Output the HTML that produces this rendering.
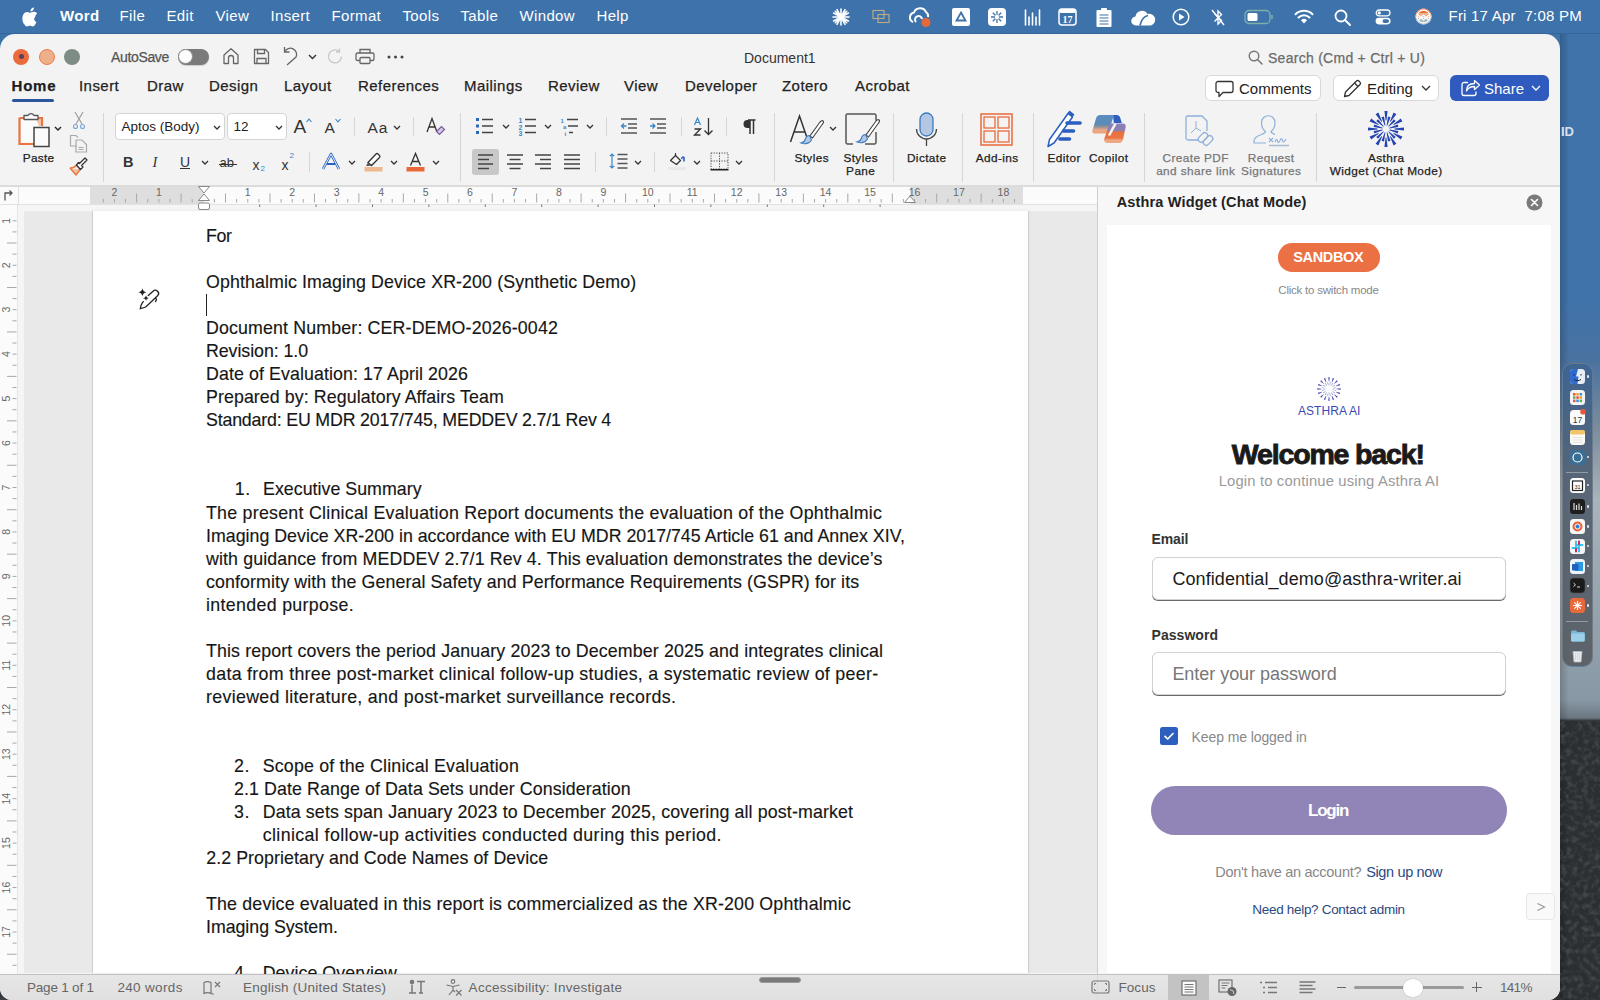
<!DOCTYPE html>
<html><head><meta charset="utf-8">
<style>
*{box-sizing:border-box;margin:0;padding:0}
html,body{width:1600px;height:1000px;overflow:hidden}
body{position:relative;font-family:"Liberation Sans",sans-serif;background:#3e72aa;color:#222}
.a{position:absolute}
.t{position:absolute;white-space:nowrap;line-height:1}
svg{position:absolute;overflow:visible}
#menubar{left:0;top:0;width:1600px;height:34px;background:#3e72aa;border-bottom:1px solid #35649a}
#menubar .t{color:#fff;font-size:15px;top:8px;letter-spacing:.35px}
#desk{left:1540px;top:34px;width:60px;height:966px;background:linear-gradient(180deg,#3f73aa 0px,#3f73aa 266px,#4a72a0 326px,#7c8d9c 396px,#a9b3bb 466px,#96a4ae 566px,#8899a6 666px,#6a7680 684px,#2c2f32 687px,#2c2f32 966px)}
#wrap{left:0;top:0;width:1560px;height:1000px;clip-path:inset(34px 0 0 0 round 15px 15px 12px 12px)}
#win{left:0;top:34px;width:1560px;height:966px;background:#f3f3f3}
.tab{position:absolute;top:78.200px;font-size:15px;color:#222;white-space:nowrap;line-height:1;-webkit-text-stroke:.25px #222;letter-spacing:.45px}
.md{-webkit-text-stroke:.25px currentColor}
.lbl{position:absolute;font-size:12.5px;color:#222;white-space:nowrap;line-height:13px;text-align:center}
.sep{position:absolute;width:1px;background:#d6d6d6}
.doc{position:absolute;font-size:17.8px;color:#161616;-webkit-text-stroke:0.15px #161616;white-space:nowrap;line-height:1}
</style></head><body>
<div id="menubar" class="a">
  <svg style="left:22px;top:7px" width="16" height="19" viewBox="0 0 16 19"><path fill="#fff" d="M13.2 10.1c0-2.3 1.9-3.4 2-3.5-1.1-1.6-2.8-1.8-3.4-1.8-1.4-.1-2.8.9-3.5.9-.7 0-1.8-.9-3-.8C3.7 4.9 2.3 5.8 1.5 7.2-.1 10-.1 14.300 2.300 17.3c.7 1 1.6 2.200 2.700 2.100 1.100 0 1.500-.7 2.800-.7s1.700.7 2.800.7c1.200 0 1.900-1 2.600-2 .8-1.200 1.200-2.300 1.200-2.400-.1 0-2.300-.9-2.300-3.500zM11 3.200c.6-.7 1-1.700.9-2.700-.9 0-1.900.6-2.500 1.300-.6.600-1 1.600-.9 2.600 1 .1 1.900-.5 2.500-1.200z"/></svg>
  <div class="t" style="left:60px;font-weight:bold">Word</div>
  <div class="t" style="left:119.5px">File</div>
  <div class="t" style="left:166.5px">Edit</div>
  <div class="t" style="left:215.5px">View</div>
  <div class="t" style="left:270.5px">Insert</div>
  <div class="t" style="left:331.5px">Format</div>
  <div class="t" style="left:402.5px">Tools</div>
  <div class="t" style="left:460.5px">Table</div>
  <div class="t" style="left:519.5px">Window</div>
  <div class="t" style="left:596.5px">Help</div>
  <!-- status icons -->
  <svg style="left:832px;top:8px" width="18" height="18" viewBox="0 0 18 18"><g stroke="#fff" stroke-width="1.6" stroke-linecap="round"><path d="M9 1v16M1 9h16M3.3 3.3l11.4 11.4M14.7 3.3L3.3 14.7M5 1.6l8 14.8M13 1.6L5 16.4M1.6 5l14.8 8M1.6 13l14.8-8"/></g></svg>
  <svg style="left:872px;top:9px" width="19" height="15" viewBox="0 0 19 15"><g fill="none" stroke="#b9a98a" stroke-width="1.2"><rect x="1" y="1.5" width="11" height="8"/><rect x="6" y="5.5" width="11" height="8"/></g></svg>
  <svg style="left:907px;top:6px" width="26" height="22" viewBox="0 0 26 22"><path d="M6 16a5 5 0 0 1 1-9.5A6.500 6.500 0 0 1 19 6a5 5 0 0 1 2 5" fill="none" stroke="#fff" stroke-width="2"/><path d="M9 16a3.500 3.500 0 1 1 6-3" fill="none" stroke="#fff" stroke-width="2"/><circle cx="19" cy="16.500" r="4.500" fill="#e8683a"/></svg>
  <svg style="left:952px;top:8px" width="18" height="18" viewBox="0 0 18 18"><rect width="18" height="18" rx="2" fill="#fff"/><path d="M9 4.500l4.500 8h-9z" fill="none" stroke="#3e72aa" stroke-width="1.800"/></svg>
  <svg style="left:988px;top:8px" width="18" height="18" viewBox="0 0 18 18"><rect width="18" height="18" rx="4" fill="#fff"/><g stroke="#3e72aa" stroke-width="1.300"><path d="M9 3v12M3 9h12M4.800 4.800l8.400 8.400M13.200 4.800l-8.400 8.400"/></g><circle cx="9" cy="9" r="2.200" fill="#fff"/></svg>
  <svg style="left:1024px;top:8px" width="17" height="18" viewBox="0 0 17 18"><g stroke="#fff" stroke-width="1.600" stroke-linecap="round"><path d="M1.500 2v15M5 9v8M8.500 5v12M12 9v8M15.500 2v15"/></g></svg>
  <svg style="left:1058px;top:8px" width="19" height="18" viewBox="0 0 19 18"><rect x="1" y="1" width="17" height="16" rx="3" fill="none" stroke="#fff" stroke-width="1.500"/><rect x="1" y="1" width="17" height="4" rx="2" fill="#fff"/><text x="9.500" y="15" font-size="10" font-weight="bold" fill="#fff" text-anchor="middle" font-family="Liberation Serif">17</text></svg>
  <svg style="left:1096px;top:8px" width="16" height="19" viewBox="0 0 16 19"><rect x="0.500" y="2" width="15" height="17" rx="1" fill="#fff"/><rect x="5" y="0" width="6" height="3" rx="1" fill="#fff"/><g stroke="#3e72aa" stroke-width="1.200"><path d="M3.500 7h9M3.500 10h9M3.500 13h9M3.500 16h9"/></g></svg>
  <svg style="left:1131px;top:9px" width="25" height="17" viewBox="0 0 25 17"><path d="M5 16.500a4.500 4.500 0 0 1-.5-9A6.500 6.500 0 0 1 16.500 5 5.500 5.500 0 0 1 20 16.500z" fill="#fff"/><path d="M9 16.500c1-5 4-9 8-10" stroke="#3e72aa" stroke-width="1.800" fill="none"/></svg>
  <svg style="left:1172px;top:8px" width="18" height="18" viewBox="0 0 18 18"><circle cx="9" cy="9" r="7.800" fill="none" stroke="#fff" stroke-width="1.500"/><path d="M7 5.500v7l5.500-3.500z" fill="#fff"/></svg>
  <svg style="left:1211px;top:8px" width="14" height="19" viewBox="0 0 14 19"><path d="M3.500 5.500l7 7-3.500 3.500V3l3.500 3.500-7 7" fill="none" stroke="#fff" stroke-width="1.400"/><path d="M1 2l12 15" stroke="#fff" stroke-width="1.400"/></svg>
  <svg style="left:1244px;top:9px" width="30" height="16" viewBox="0 0 30 16"><rect x="1" y="1.500" width="25" height="13" rx="4" fill="none" stroke="#7fb0a8" stroke-width="1.300"/><rect x="3.500" y="4" width="10" height="8" rx="1.500" fill="#fff"/><path d="M28 6v4" stroke="#7fb0a8" stroke-width="1.500"/></svg>
  <svg style="left:1294px;top:9px" width="20" height="15" viewBox="0 0 20 15"><path d="M10 14.500l-3-3.300a4.300 4.300 0 0 1 6 0z" fill="#fff"/><path d="M4.500 8.500a7.800 7.800 0 0 1 11 0M1.500 5.200a12.300 12.300 0 0 1 17 0" fill="none" stroke="#fff" stroke-width="2" stroke-linecap="round"/></svg>
  <svg style="left:1334px;top:9px" width="17" height="17" viewBox="0 0 17 17"><circle cx="7" cy="7" r="5.500" fill="none" stroke="#fff" stroke-width="1.800"/><path d="M11 11l5 5" stroke="#fff" stroke-width="2" stroke-linecap="round"/></svg>
  <svg style="left:1375px;top:8.500px" width="17" height="16" viewBox="0 0 17 16"><rect x="1.200" y="1" width="13.800" height="5.800" rx="2.900" fill="none" stroke="#fff" stroke-width="1.300"/><circle cx="4.300" cy="3.900" r="1.600" fill="#fff"/><rect x="0.600" y="8.800" width="15" height="6.600" rx="3.300" fill="#fff"/><rect x="7.500" y="10.200" width="6.500" height="3.800" rx="1.900" fill="#3e72aa"/></svg>
<svg style="left:1415px;top:8px" width="17" height="17" viewBox="0 0 17 17"><defs><clipPath id="avc"><circle cx="8.500" cy="8.500" r="8.100"/></clipPath></defs><g clip-path="url(#avc)"><rect width="17" height="17" fill="#f3ede8"/><rect width="17" height="5" fill="#eb6f3d"/><rect y="5" width="17" height="4" fill="#f2b48e"/><rect y="10" width="17" height="7" fill="#a9b9c8"/></g><path d="M3 12.500L8.500 7l5.500 5.500M3 7l5.500 5 5.500-5" fill="none" stroke="#fff" stroke-width="1.200"/><circle cx="8.500" cy="8.500" r="6.500" fill="none" stroke="#fff" stroke-width="1.300"/></svg>
<div class="t" style="left:1448.500px;letter-spacing:.22px">Fri 17 Apr&nbsp; 7:08 PM</div>
</div>
<div id="desk" class="a"></div>
<div class="a" style="left:0;top:960px;width:30px;height:40px;background:#33373a"></div>
<div class="a" style="left:1560px;top:34px;width:9px;height:966px;background:linear-gradient(90deg,rgba(0,0,0,.18),rgba(0,0,0,0))"></div>
<div class="t" style="left:1561px;top:125px;font-size:13px;font-weight:bold;color:#d8e0ea">ID</div>
<div class="a" style="left:1561.500px;top:363px;width:31.500px;height:304px;border-radius:10px;background:linear-gradient(180deg,rgba(62,100,145,.92) 0%,rgba(80,95,112,.9) 38%,rgba(88,92,98,.9) 100%);border:1px solid rgba(255,255,255,.15)"></div>
<svg style="left:1570px;top:368.9px" width="15" height="15" viewBox="0 0 15 15"><rect x="0" y="0" width="15" height="15" rx="3.500" fill="#e8eef8"/><path d="M0 3.500A3.500 3.500 0 0 1 3.500 0H8l-2 7.500h2.500L7.500 15H3.500A3.500 3.500 0 0 1 0 11.500z" fill="#2f6ad0"/><path d="M4 5v1.500M11 5v1.500M4 10.500c2 1.500 5 1.500 7 0" stroke="#223" stroke-width="1" fill="none"/></svg>
<svg style="left:1570px;top:390.3px" width="15" height="15" viewBox="0 0 15 15"><rect width="15" height="15" rx="3.500" fill="#f4f4f4"/><g fill="#e5553a"><rect x="3" y="3" width="2.500" height="2.500"/><rect x="6.300" y="3" width="2.500" height="2.500" fill="#f0a030"/><rect x="9.600" y="3" width="2.500" height="2.500" fill="#3a8ad8"/><rect x="3" y="6.300" width="2.500" height="2.500" fill="#5ab050"/><rect x="6.300" y="6.300" width="2.500" height="2.500"/><rect x="9.600" y="6.300" width="2.500" height="2.500" fill="#f0a030"/><rect x="3" y="9.600" width="2.500" height="2.500" fill="#e5553a"/><rect x="6.300" y="9.600" width="2.500" height="2.500" fill="#3a8ad8"/><rect x="9.600" y="9.600" width="2.500" height="2.500" fill="#5ab050"/></g></svg>
<svg style="left:1570px;top:410.1px" width="15" height="15" viewBox="0 0 15 15"><rect width="15" height="15" rx="3.500" fill="#fbfbfb"/><text x="7.500" y="12.500" font-size="8.500" text-anchor="middle" fill="#333" font-family="Liberation Sans">17</text><circle cx="13" cy="1.800" r="2.800" fill="#e8583a"/></svg>
<svg style="left:1570px;top:429.9px" width="15" height="15" viewBox="0 0 15 15"><rect width="15" height="15" rx="3.500" fill="#fdfbf5"/><rect width="15" height="4.500" rx="2" fill="#f3c46a"/><path d="M2.500 7.500h10M2.500 10h10M2.500 12.500h10" stroke="#ddd" stroke-width=".8"/></svg>
<svg style="left:1570px;top:449.7px" width="15" height="15" viewBox="0 0 15 15"><rect width="15" height="15" rx="3.500" fill="#3b6e95"/><circle cx="7.500" cy="7.500" r="4.500" fill="none" stroke="#fff" stroke-width="1.200"/></svg>
<svg style="left:1570px;top:477.5px" width="15" height="15" viewBox="0 0 15 15"><rect width="15" height="15" rx="3.500" fill="#fff"/><rect x="2.500" y="3" width="10" height="9.500" fill="none" stroke="#222" stroke-width="1.200"/><text x="7.500" y="10.800" font-size="5.500" text-anchor="middle" fill="#222" font-family="Liberation Sans">31</text></svg>
<svg style="left:1570px;top:499.1px" width="15" height="15" viewBox="0 0 15 15"><rect width="15" height="15" rx="3.500" fill="#1e1e1e"/><path d="M4 4v7M6.500 6v5M9 4.500v6.500M11.500 7v4" stroke="#ddd" stroke-width="1.200"/></svg>
<svg style="left:1570px;top:518.9px" width="15" height="15" viewBox="0 0 15 15"><rect width="15" height="15" rx="3.500" fill="#f6f6f6"/><circle cx="7.500" cy="7.500" r="5" fill="#e8663a"/><circle cx="7.500" cy="7.500" r="2.500" fill="#3a7ad8" stroke="#fff" stroke-width="1"/></svg>
<svg style="left:1570px;top:538.7px" width="15" height="15" viewBox="0 0 15 15"><rect width="15" height="15" rx="3.500" fill="#f6f6f6"/><path d="M6 2.500v5M9 7.500v5M2.500 9h5M7.500 6h5" stroke-width="2" stroke-linecap="round" stroke="#36c5f0"/><path d="M9 2.500v2.500M6 10v2.500" stroke="#e01e5a" stroke-width="2" stroke-linecap="round"/></svg>
<svg style="left:1570px;top:558.5px" width="15" height="15" viewBox="0 0 15 15"><rect width="15" height="15" rx="3.500" fill="#eef3fb"/><rect x="5" y="3" width="8" height="9" fill="#2a9ae0"/><rect x="2" y="5" width="6.500" height="6.500" rx="1" fill="#1f5fc0"/></svg>
<svg style="left:1570px;top:578.2px" width="15" height="15" viewBox="0 0 15 15"><rect width="15" height="15" rx="3.500" fill="#1a1a1a" stroke="#555" stroke-width=".6"/><path d="M3.500 5l2 1.800-2 1.800M7 9h3" stroke="#ddd" stroke-width="1" fill="none"/></svg>
<svg style="left:1570px;top:598.0px" width="15" height="15" viewBox="0 0 15 15"><rect width="15" height="15" rx="3.500" fill="#e86a3c"/><g stroke="#fff" stroke-width="1.100"><path d="M7.500 3v9M3 7.500h9M4.300 4.300l6.400 6.400M10.700 4.300l-6.400 6.400"/></g></svg>
<svg style="left:1570px;top:627.7px" width="15" height="15" viewBox="0 0 15 15"><path d="M1 4a1.500 1.500 0 0 1 1.500-1.500h3.500l1.500 1.500h6a1.500 1.500 0 0 1 1.500 1.500V12a1.500 1.500 0 0 1-1.500 1.500h-11A1.500 1.500 0 0 1 1 12z" fill="#7ab8d8"/><rect x="1" y="5.500" width="13.500" height="8" rx="1.500" fill="#9cd0ea"/></svg>
<svg style="left:1570px;top:647.5px" width="15" height="15" viewBox="0 0 15 15"><path d="M3 3.500h9l-1 10.500H4z" fill="#e8eaee" stroke="#b8bcc4" stroke-width=".8"/><path d="M5.500 5v7M7.500 5v7M9.500 5v7" stroke="#c8ccd2" stroke-width=".6"/></svg>
<div class="a" style="left:1586.500px;top:375.2px;width:2.400px;height:2.400px;border-radius:50%;background:#e8e8e8"></div>
<div class="a" style="left:1586.500px;top:456.0px;width:2.400px;height:2.400px;border-radius:50%;background:#e8e8e8"></div>
<div class="a" style="left:1586.500px;top:483.8px;width:2.400px;height:2.400px;border-radius:50%;background:#e8e8e8"></div>
<div class="a" style="left:1586.500px;top:505.4px;width:2.400px;height:2.400px;border-radius:50%;background:#e8e8e8"></div>
<div class="a" style="left:1586.500px;top:525.2px;width:2.400px;height:2.400px;border-radius:50%;background:#e8e8e8"></div>
<div class="a" style="left:1586.500px;top:545.0px;width:2.400px;height:2.400px;border-radius:50%;background:#e8e8e8"></div>
<div class="a" style="left:1586.500px;top:564.8px;width:2.400px;height:2.400px;border-radius:50%;background:#e8e8e8"></div>
<div class="a" style="left:1586.500px;top:584.5px;width:2.400px;height:2.400px;border-radius:50%;background:#e8e8e8"></div>
<div class="a" style="left:1586.500px;top:604.3px;width:2.400px;height:2.400px;border-radius:50%;background:#e8e8e8"></div>
<div class="a" style="left:1566px;top:472px;width:22px;height:1px;background:rgba(255,255,255,.35)"></div>
<div class="a" style="left:1566px;top:621px;width:22px;height:1px;background:rgba(255,255,255,.35)"></div>
<svg style="left:0;top:721px" width="1600" height="279" viewBox="0 0 1600 279"><filter id="rk" color-interpolation-filters="sRGB" x="0" y="0" width="1" height="1"><feTurbulence type="fractalNoise" baseFrequency=".18" numOctaves="2" seed="3"/><feColorMatrix values="0 0 0 0 .27  0 0 0 0 .29  0 0 0 0 .31  0 0 0 -2.400 1.350"/></filter><rect x="1560" y="0" width="40" height="279" filter="url(#rk)"/><rect x="0" y="239" width="30" height="40" filter="url(#rk)"/></svg>
<div id="wrap" class="a">
<div id="win" class="a"></div>
<!-- traffic lights -->
<div class="a" style="left:13px;top:48.5px;width:16px;height:16px;border-radius:50%;background:#ec6b3d"></div>
<div class="a" style="left:18.5px;top:54px;width:5px;height:5px;border-radius:50%;background:#5a4060"></div>
<div class="a" style="left:38.5px;top:48.5px;width:16px;height:16px;border-radius:50%;background:#eeb08a;border:1.2px solid #ee7a45"></div>
<div class="a" style="left:64px;top:48.5px;width:16px;height:16px;border-radius:50%;background:#7e8c86"></div>
<div class="t md" style="left:111px;top:50px;font-size:14px;color:#555;letter-spacing:-.35px">AutoSave</div>
<div class="a" style="left:177.5px;top:48.5px;width:31px;height:16px;border-radius:8px;background:#7a7a7a;box-shadow:0 1px 1px rgba(0,0,0,.15)"></div>
<div class="a" style="left:178px;top:49px;width:15px;height:15px;border-radius:50%;background:#fdfdfd;border:1px solid #8a8a8a"></div>
<svg style="left:222px;top:47px" width="18" height="18" viewBox="0 0 18 18"><path d="M2 16.500V8L9 1.800 16 8v8.500h-4.500v-5.500a2.500 2.500 0 0 0-5 0v5.500z" fill="none" stroke="#666" stroke-width="1.300" stroke-linejoin="round"/></svg>
<svg style="left:253px;top:48px" width="17" height="17" viewBox="0 0 17 17"><path d="M1.500 1.500h11l3 3v11h-14z" fill="none" stroke="#666" stroke-width="1.300" stroke-linejoin="round"/><path d="M4.500 1.500v4h7v-4M4 15.500v-5h9v5" fill="none" stroke="#666" stroke-width="1.300"/></svg>
<svg style="left:283px;top:46px" width="17" height="20" viewBox="0 0 17 20"><path d="M1.500 1v5h5" fill="none" stroke="#666" stroke-width="1.300"/><path d="M1.800 5.800A6 6 0 1 1 13 11L4 19" fill="none" stroke="#666" stroke-width="1.300"/></svg>
<svg style="left:308px;top:54px" width="9" height="6" viewBox="0 0 9 6"><path d="M1 1l3.500 3.500L8 1" fill="none" stroke="#333" stroke-width="1.400"/></svg>
<svg style="left:327px;top:48px" width="17" height="17" viewBox="0 0 17 17"><path d="M14.500 8.500A6.500 6.500 0 1 1 12 3.300" fill="none" stroke="#c8c8c8" stroke-width="1.300"/><path d="M12.500 0.500v3.500H9" fill="none" stroke="#c8c8c8" stroke-width="1.300"/></svg>
<svg style="left:355px;top:48px" width="20" height="17" viewBox="0 0 20 17"><path d="M5 5V1.500h10V5M5 12.500H2.500a1.500 1.500 0 0 1-1.500-1.500V6.500A1.500 1.500 0 0 1 2.500 5h15A1.500 1.500 0 0 1 19 6.500V11a1.500 1.500 0 0 1-1.500 1.500H15" fill="none" stroke="#666" stroke-width="1.300"/><rect x="5" y="9.500" width="10" height="6" rx="1" fill="none" stroke="#666" stroke-width="1.300"/></svg>
<svg style="left:387px;top:55px" width="17" height="4" viewBox="0 0 17 4"><circle cx="2" cy="2" r="1.500" fill="#444"/><circle cx="8.500" cy="2" r="1.500" fill="#444"/><circle cx="15" cy="2" r="1.500" fill="#444"/></svg>
<div class="t" style="left:744px;top:50.500px;font-size:14px;color:#333">Document1</div>
<svg style="left:1248px;top:50px" width="15" height="15" viewBox="0 0 15 15"><circle cx="6" cy="6" r="4.800" fill="none" stroke="#777" stroke-width="1.400"/><path d="M9.500 9.500l4.500 4.500" stroke="#777" stroke-width="1.500" stroke-linecap="round"/></svg>
<div class="t md" style="left:1268px;top:51px;font-size:14px;color:#6b6b6b;letter-spacing:.27px">Search (Cmd + Ctrl + U)</div>
<!-- tabs -->
<div class="tab" style="left:11.500px;font-weight:bold;color:#1d1d1d;letter-spacing:.8px">Home</div>
<div class="a" style="left:12px;top:98.500px;width:42px;height:3px;border-radius:2px;background:#2b579a"></div>
<div class="tab" style="left:79px">Insert</div>
<div class="tab" style="left:147px">Draw</div>
<div class="tab" style="left:209px">Design</div>
<div class="tab" style="left:284px">Layout</div>
<div class="tab" style="left:358px">References</div>
<div class="tab" style="left:464px">Mailings</div>
<div class="tab" style="left:548px">Review</div>
<div class="tab" style="left:624px">View</div>
<div class="tab" style="left:685px">Developer</div>
<div class="tab" style="left:782px">Zotero</div>
<div class="tab" style="left:855px">Acrobat</div>
<!-- right buttons -->
<div class="a" style="left:1205px;top:75px;width:116px;height:26px;border-radius:6px;background:#fff;border:1px solid #d9d9d9"></div>
<svg style="left:1215px;top:80px" width="19" height="18" viewBox="0 0 19 18"><path d="M3 1.500h13a2 2 0 0 1 2 2v7a2 2 0 0 1-2 2H8l-4 4v-4H3a2 2 0 0 1-2-2v-7a2 2 0 0 1 2-2z" fill="none" stroke="#333" stroke-width="1.300" stroke-linejoin="round"/></svg>
<div class="t" style="left:1239px;top:81px;font-size:15px;color:#222">Comments</div>
<div class="a" style="left:1333px;top:75px;width:106px;height:26px;border-radius:6px;background:#fff;border:1px solid #d9d9d9"></div>
<svg style="left:1343px;top:79px" width="19" height="19" viewBox="0 0 19 19"><path d="M1.500 17.500l1-4.500L13.500 2a1.700 1.700 0 0 1 2.400 0l1.100 1.100a1.700 1.700 0 0 1 0 2.400L6 16.500z" fill="none" stroke="#333" stroke-width="1.300" stroke-linejoin="round"/><path d="M11.500 4l3.500 3.500" stroke="#333" stroke-width="1.300"/></svg>
<div class="t" style="left:1367px;top:81px;font-size:15px;color:#222">Editing</div>
<svg style="left:1421px;top:85px" width="10" height="6" viewBox="0 0 10 6"><path d="M1 1l4 4 4-4" fill="none" stroke="#333" stroke-width="1.300"/></svg>
<div class="a" style="left:1450px;top:75px;width:99px;height:26px;border-radius:6px;background:#2e5bbd"></div>
<svg style="left:1461px;top:79px" width="19" height="18" viewBox="0 0 19 18"><path d="M7 3.500H3a2 2 0 0 0-2 2v9a2 2 0 0 0 2 2h10a2 2 0 0 0 2-2v-2" fill="none" stroke="#fff" stroke-width="1.300"/><path d="M5.500 12c0-5 3-7.500 8-7.500V1.500l5 4.500-5 4.500V7.500c-4 0-6.500 1.500-8 4.500z" fill="none" stroke="#fff" stroke-width="1.300" stroke-linejoin="round"/></svg>
<div class="t" style="left:1484px;top:81px;font-size:15px;color:#fff">Share</div>
<svg style="left:1531px;top:85px" width="10" height="6" viewBox="0 0 10 6"><path d="M1 1l4 4 4-4" fill="none" stroke="#fff" stroke-width="1.300"/></svg>
<!-- ribbon: clipboard group -->
<svg style="left:17px;top:111px" width="34" height="38" viewBox="0 0 34 38"><path d="M3 7h5M19 7h6v8" fill="none" stroke="#ea7440" stroke-width="2.200"/><path d="M2.500 6.500V33H17" fill="none" stroke="#ea7440" stroke-width="2.200"/><path d="M4 8v23.500h13V15h7V8z" fill="#fbfbfb"/><path d="M19 8h5v7h-2z" fill="#f4c2a6"/><path d="M7 4.500h4a3.300 3.300 0 0 1 6 0h4v4H7z" fill="#fff" stroke="#555" stroke-width="1.300" stroke-linejoin="round"/><rect x="17" y="16.500" width="15" height="19" fill="#fbfbfb" stroke="#444" stroke-width="1.500"/></svg>
<svg style="left:54px;top:126px" width="8" height="6" viewBox="0 0 8 6"><path d="M1 1l3 3 3-3" fill="none" stroke="#222" stroke-width="1.400"/></svg>
<div class="t md" style="left:22.800px;top:152.800px;font-size:11.800px;color:#222;letter-spacing:.3px">Paste</div>
<svg style="left:72px;top:111px" width="14" height="19" viewBox="0 0 14 19"><path d="M3 1l7 12M11 1L4 13" stroke="#9a9a9a" stroke-width="1.100" fill="none"/><circle cx="3.500" cy="15.500" r="2" fill="none" stroke="#7ba6da" stroke-width="1.100"/><circle cx="10.500" cy="15.500" r="2" fill="none" stroke="#7ba6da" stroke-width="1.100"/></svg>
<svg style="left:69px;top:134px" width="20" height="19" viewBox="0 0 20 19"><path d="M8 12H1.500V1.500H7L9 3.500" fill="none" stroke="#aaa" stroke-width="1.200"/><path d="M7 6h6l4.500 4.500V18H7z" fill="none" stroke="#aaa" stroke-width="1.200"/><path d="M9.500 13.500h5M9.500 15.500h5" stroke="#aaa" stroke-width="1"/></svg>
<svg style="left:69px;top:158px" width="20" height="18" viewBox="0 0 20 18"><path d="M1 10l6 7 4-5.500" fill="#f4c0a0" stroke="#ea7440" stroke-width="1.400" stroke-linejoin="round"/><path d="M1 10c3 0 5-1 6.500-3l4 4.500" fill="none" stroke="#ea7440" stroke-width="1.400"/><path d="M7.500 7l4 4.500 2.500-2.500-1.500-1.500 5.500-5.500-2-2-5.500 5.500-1-1z" fill="#fff" stroke="#333" stroke-width="1.300" stroke-linejoin="round"/></svg>
<div class="sep" style="left:103px;top:113px;height:69px"></div>
<!-- font group -->
<div class="a" style="left:114.500px;top:113.300px;width:110px;height:26.500px;border-radius:4px;background:#fff;border:1px solid #d4d4d4"></div>
<div class="t" style="left:121.500px;top:119.500px;font-size:13.500px;color:#222">Aptos (Body)</div>
<svg style="left:212.500px;top:125px" width="8" height="6" viewBox="0 0 8 6"><path d="M1 1l3 3 3-3" fill="none" stroke="#333" stroke-width="1.300"/></svg>
<div class="a" style="left:227px;top:113.300px;width:60px;height:26.500px;border-radius:4px;background:#fff;border:1px solid #d4d4d4"></div>
<div class="t" style="left:233.500px;top:119.500px;font-size:13.500px;color:#222">12</div>
<svg style="left:274.500px;top:125px" width="8" height="6" viewBox="0 0 8 6"><path d="M1 1l3 3 3-3" fill="none" stroke="#333" stroke-width="1.300"/></svg>
<div class="t" style="left:293.500px;top:116.500px;font-size:19px;color:#333">A</div>
<svg style="left:306px;top:118px" width="6" height="5" viewBox="0 0 6 5"><path d="M0.500 4L3 1.200 5.500 4" fill="none" stroke="#3a87c8" stroke-width="1.100"/></svg>
<div class="t" style="left:324.500px;top:119.500px;font-size:15.500px;color:#333">A</div>
<svg style="left:335px;top:118px" width="6" height="5" viewBox="0 0 6 5"><path d="M0.500 1L3 3.800 5.500 1" fill="none" stroke="#3a87c8" stroke-width="1.100"/></svg>
<div class="sep" style="left:353.500px;top:117px;height:19px"></div>
<div class="t" style="left:367.500px;top:119.500px;font-size:15.500px;color:#333;letter-spacing:1px">Aa</div>
<svg style="left:393px;top:125px" width="8" height="6" viewBox="0 0 8 6"><path d="M1 1l3 3 3-3" fill="none" stroke="#333" stroke-width="1.300"/></svg>
<div class="sep" style="left:412.500px;top:117px;height:19px"></div>
<svg style="left:426px;top:117px" width="19" height="19" viewBox="0 0 19 19"><path d="M1 15L6 1.500 11 15M3 10h6" fill="none" stroke="#333" stroke-width="1.300"/><path d="M10.500 14.500l5-5 3 3-5 5z" fill="#d8c8e8" stroke="#7a5a9a" stroke-width="1.200"/></svg>
<!-- row2 font -->
<div class="t" style="left:123px;top:154.500px;font-size:14.500px;font-weight:bold;color:#333">B</div>
<div class="t" style="left:152.500px;top:154.500px;font-size:14.500px;font-style:italic;font-family:'Liberation Serif',serif;color:#333">I</div>
<div class="t" style="left:180px;top:154.500px;font-size:14px;color:#333">U</div>
<div class="a" style="left:180px;top:168px;width:10px;height:1.300px;background:#333"></div>
<svg style="left:201px;top:160px" width="8" height="6" viewBox="0 0 8 6"><path d="M1 1l3 3 3-3" fill="none" stroke="#333" stroke-width="1.300"/></svg>
<div class="t" style="left:219.500px;top:156px;font-size:13px;color:#333">ab</div>
<div class="a" style="left:218.500px;top:163.500px;width:18px;height:1.200px;background:#333"></div>
<div class="t" style="left:252.500px;top:157.500px;font-size:14px;color:#333">x</div>
<div class="t" style="left:260.500px;top:165px;font-size:8px;color:#3a87c8">2</div>
<div class="t" style="left:281.500px;top:157.500px;font-size:14px;color:#333">x</div>
<div class="t" style="left:289.500px;top:152px;font-size:8px;color:#3a87c8">2</div>
<div class="sep" style="left:308.500px;top:152px;height:20px"></div>
<svg style="left:322px;top:153px" width="18" height="17" viewBox="0 0 18 17"><path d="M1 16L9 1l8 15" fill="none" stroke="#2a62c0" stroke-width="2.600" stroke-linejoin="round"/><path d="M1 16L9 1l8 15" fill="none" stroke="#fff" stroke-width="0.900"/><path d="M5 11h8" stroke="#2a62c0" stroke-width="2.200"/></svg>
<svg style="left:347.500px;top:160px" width="8" height="6" viewBox="0 0 8 6"><path d="M1 1l3 3 3-3" fill="none" stroke="#333" stroke-width="1.300"/></svg>
<svg style="left:364px;top:152px" width="19" height="20" viewBox="0 0 19 20"><path d="M4 10.500l8-8.500a1.500 1.500 0 0 1 2 0l1.500 1.500a1.500 1.500 0 0 1 0 2L7.500 13.500z" fill="#fff" stroke="#333" stroke-width="1.300"/><path d="M4 10.500l-2 3.500 2 0 3.500-0.500" fill="#555"/><rect x="0.500" y="15" width="18" height="4.500" fill="#f0b890"/></svg>
<svg style="left:389.500px;top:160px" width="8" height="6" viewBox="0 0 8 6"><path d="M1 1l3 3 3-3" fill="none" stroke="#333" stroke-width="1.300"/></svg>
<svg style="left:406px;top:152px" width="19" height="20" viewBox="0 0 19 20"><path d="M4.500 13.500L9.500 1.500l5 12M6.300 9.500h6.400" fill="none" stroke="#333" stroke-width="1.300"/><rect x="0.500" y="15" width="18" height="4.500" fill="#e8683a"/></svg>
<svg style="left:431.500px;top:160px" width="8" height="6" viewBox="0 0 8 6"><path d="M1 1l3 3 3-3" fill="none" stroke="#333" stroke-width="1.300"/></svg>
<div class="sep" style="left:460px;top:113px;height:69px"></div>
<!-- paragraph group row1 -->
<svg style="left:476px;top:118px" width="18" height="16" viewBox="0 0 18 16"><g fill="#2a6ab8"><rect x="0" y="0" width="3" height="3"/><rect x="0" y="6.500" width="3" height="3"/><rect x="0" y="13" width="3" height="3"/></g><g stroke="#444" stroke-width="1.300"><path d="M6 1.500h11M6 8h11M6 14.500h11"/></g></svg>
<svg style="left:501.500px;top:124px" width="8" height="6" viewBox="0 0 8 6"><path d="M1 1l3 3 3-3" fill="none" stroke="#333" stroke-width="1.300"/></svg>
<svg style="left:518px;top:117px" width="19" height="19" viewBox="0 0 19 19"><g fill="#3a87c8" font-size="7" font-family="Liberation Sans" font-weight="bold"><text x="0.500" y="6">1</text><text x="0.500" y="12.500">2</text><text x="0.500" y="19">3</text></g><g stroke="#444" stroke-width="1.300"><path d="M7 2.500h11M7 9h11M7 15.500h11"/></g></svg>
<svg style="left:543.500px;top:124px" width="8" height="6" viewBox="0 0 8 6"><path d="M1 1l3 3 3-3" fill="none" stroke="#333" stroke-width="1.300"/></svg>
<svg style="left:560px;top:117px" width="19" height="19" viewBox="0 0 19 19"><g fill="#3a87c8" font-size="6" font-family="Liberation Sans" font-weight="bold"><text x="0.500" y="5.500">1</text><text x="3" y="12">a</text><text x="4.500" y="18.500">i</text></g><g stroke="#444" stroke-width="1.300"><path d="M7 2.500h11M8 9h10M9 15.500h4"/></g></svg>
<svg style="left:586px;top:124px" width="8" height="6" viewBox="0 0 8 6"><path d="M1 1l3 3 3-3" fill="none" stroke="#333" stroke-width="1.300"/></svg>
<div class="sep" style="left:606px;top:117px;height:19px"></div>
<svg style="left:620px;top:118px" width="18" height="16" viewBox="0 0 18 16"><g stroke="#555" stroke-width="1.300"><path d="M1 1h16M8 6h9M8 10h9M1 15h16"/></g><path d="M6.500 8H1.500M4 5.500L1.500 8 4 10.500" fill="none" stroke="#3a87c8" stroke-width="1.300"/></svg>
<svg style="left:649px;top:118px" width="18" height="16" viewBox="0 0 18 16"><g stroke="#555" stroke-width="1.300"><path d="M1 1h16M8 6h9M8 10h9M1 15h16"/></g><path d="M1 8h5M3.500 5.500L6 8 3.500 10.500" fill="none" stroke="#3a87c8" stroke-width="1.300"/></svg>
<div class="sep" style="left:680.500px;top:117px;height:19px"></div>
<svg style="left:693px;top:117px" width="20" height="19" viewBox="0 0 20 19"><path d="M1.500 8L4.500 1 7.500 8M2.700 5.500h3.600" fill="none" stroke="#3a87c8" stroke-width="1.200"/><path d="M1.500 12h6l-6 6h6" fill="none" stroke="#333" stroke-width="1.300"/><path d="M15.500 1v16.500M11.500 13.500l4 4 4-4" fill="none" stroke="#333" stroke-width="1.300"/></svg>
<div class="sep" style="left:726px;top:117px;height:19px"></div>
<svg style="left:742px;top:119px" width="14" height="15" viewBox="0 0 14 15"><path d="M6 1h7.500M8 1v14M11.500 1v14" fill="none" stroke="#333" stroke-width="1.500"/><path d="M8 1H5.500a4 4 0 0 0 0 8H8z" fill="#333"/></svg>
<!-- paragraph row2 -->
<div class="a" style="left:472px;top:149px;width:27px;height:26px;border-radius:3px;background:#c8c8c8"></div>
<svg style="left:478px;top:154px" width="16" height="16" viewBox="0 0 16 16"><g stroke="#444" stroke-width="1.300"><path d="M0 1h15M0 5.500h11M0 10h15M0 14.500h11"/></g></svg>
<svg style="left:506.500px;top:154px" width="16" height="16" viewBox="0 0 16 16"><g stroke="#444" stroke-width="1.300"><path d="M0 1h16M2.500 5.500h11M0 10h16M2.500 14.500h11"/></g></svg>
<svg style="left:535px;top:154px" width="16" height="16" viewBox="0 0 16 16"><g stroke="#444" stroke-width="1.300"><path d="M0 1h16M5 5.500h11M0 10h16M5 14.500h11"/></g></svg>
<svg style="left:564px;top:154px" width="16" height="16" viewBox="0 0 16 16"><g stroke="#444" stroke-width="1.300"><path d="M0 1h16M0 5.500h16M0 10h16M0 14.500h16"/></g></svg>
<div class="sep" style="left:595px;top:152px;height:20px"></div>
<svg style="left:608.500px;top:153px" width="19" height="16" viewBox="0 0 19 16"><path d="M3 1v14M0.800 3.200L3 1l2.200 2.200M0.800 12.800L3 15l2.200-2.200" fill="none" stroke="#3a87c8" stroke-width="1.200"/><g stroke="#555" stroke-width="1.300"><path d="M8.500 1.500h10M8.500 6h10M8.500 10.500h10M8.500 15h10"/></g></svg>
<svg style="left:634px;top:160px" width="8" height="6" viewBox="0 0 8 6"><path d="M1 1l3 3 3-3" fill="none" stroke="#333" stroke-width="1.300"/></svg>
<div class="sep" style="left:654px;top:152px;height:20px"></div>
<svg style="left:669px;top:152px" width="17" height="15" viewBox="0 0 17 15"><path d="M1.500 8.500L6.500 3.500l5 5-4 4z" fill="none" stroke="#333" stroke-width="1.300" stroke-linejoin="round"/><path d="M6.500 3.500V1" stroke="#333" stroke-width="1.200"/><path d="M12.500 7c.5-2 1.500-2.500 2.500-1.500v4" fill="none" stroke="#2a62c0" stroke-width="1.600"/></svg>
<div class="a" style="left:668px;top:167px;width:18px;height:3px;background:#e8e8e8"></div>
<svg style="left:693px;top:160px" width="8" height="6" viewBox="0 0 8 6"><path d="M1 1l3 3 3-3" fill="none" stroke="#333" stroke-width="1.300"/></svg>
<svg style="left:709.500px;top:152px" width="19" height="19" viewBox="0 0 19 19"><g stroke="#555" stroke-width="1" stroke-dasharray="1.300 1.300" fill="none"><rect x="1" y="1" width="17" height="16"/><path d="M9.500 1v16M1 9h17"/></g><path d="M0.500 17.800h18" stroke="#222" stroke-width="1.500"/></svg>
<svg style="left:735px;top:160px" width="8" height="6" viewBox="0 0 8 6"><path d="M1 1l3 3 3-3" fill="none" stroke="#333" stroke-width="1.300"/></svg>
<div class="sep" style="left:773.500px;top:113px;height:69px"></div>
<svg style="left:789px;top:114px" width="36" height="35" viewBox="0 0 36 35"><path d="M1.500 28L10.500 2 19.500 28M5 18h11" fill="none" stroke="#333" stroke-width="1.500"/><path d="M34 7c-1-1-2 0-3 1l-10 14 2.500 2 10-14c1-1 1.500-2 .500-3z" fill="#fff" stroke="#444" stroke-width="1.100"/><path d="M20.500 21.500c-2 0-3.500 1.500-4 3.500-.5 2-2 3.500-4.500 4 4 1.500 8.500 .5 10.500-3z" fill="#b8c8e0" stroke="#3a7ac0" stroke-width="1.100"/></svg>
<svg style="left:828.500px;top:126px" width="8" height="6" viewBox="0 0 8 6"><path d="M1 1l3 3 3-3" fill="none" stroke="#333" stroke-width="1.300"/></svg>
<div class="t md" style="left:790px;top:152.51px;font-size:11.8px;color:#222;width:43.0px;text-align:center;letter-spacing:.4px;text-indent:.4px">Styles</div>
<svg style="left:845px;top:112.500px" width="36" height="35" viewBox="0 0 36 35"><path d="M8 31H2.500a1.500 1.500 0 0 1-1.500-1.500V2.500A1.500 1.500 0 0 1 2.500 1h27A1.500 1.500 0 0 1 31 2.500v5M31 19v10.500a1.500 1.500 0 0 1-1.500 1.500H20" fill="none" stroke="#555" stroke-width="1.500"/><path d="M34 7c-1-1-2 0-3 1l-10 14 2.500 2 10-14c1-1 1.500-2 .500-3z" fill="#fff" stroke="#444" stroke-width="1.100"/><path d="M20.500 21.500c-2 0-3.500 1.500-4 3.500-.5 2-2 3.500-4.500 4 4 1.500 8.500 .5 10.500-3z" fill="#b8c8e0" stroke="#3a7ac0" stroke-width="1.100"/></svg>
<div class="t md" style="left:840px;top:152.51px;font-size:11.8px;color:#222;width:41.0px;text-align:center;letter-spacing:.4px;text-indent:.4px">Styles</div>
<div class="t md" style="left:840px;top:166.01px;font-size:11.8px;color:#222;width:41.0px;text-align:center;letter-spacing:.4px;text-indent:.4px">Pane</div>
<div class="sep" style="left:892.500px;top:113px;height:69px"></div>
<svg style="left:915px;top:111.500px" width="23" height="35" viewBox="0 0 23 35"><rect x="5" y="1" width="13" height="23" rx="6.500" fill="#b3c7e3" stroke="#3a7ac0" stroke-width="1.300"/><path d="M1.500 17a10 10 0 0 0 20 0M11.500 27v7" fill="none" stroke="#444" stroke-width="1.300"/></svg>
<div class="t md" style="left:900px;top:152.51px;font-size:11.8px;color:#222;width:53.0px;text-align:center;letter-spacing:.4px;text-indent:.4px">Dictate</div>
<div class="sep" style="left:961.500px;top:113px;height:69px"></div>
<svg style="left:979.500px;top:112.500px" width="33" height="33" viewBox="0 0 33 33"><rect x="1" y="1" width="31" height="31" fill="none" stroke="#ea6a3a" stroke-width="1.500"/><g fill="none" stroke="#ea6a3a" stroke-width="1.300"><rect x="4" y="4" width="11" height="11"/><rect x="18" y="4" width="11" height="11"/><rect x="4" y="18" width="11" height="11"/><rect x="18" y="18" width="11" height="11"/></g></svg>
<div class="t md" style="left:970px;top:152.51px;font-size:11.8px;color:#222;width:54.0px;text-align:center;letter-spacing:.4px;text-indent:.4px">Add-ins</div>
<div class="sep" style="left:1032.500px;top:113px;height:69px"></div>
<svg style="left:1046.500px;top:111.500px" width="36" height="36" viewBox="0 0 36 36"><path d="M21 1.500l4.500 3.500L7 31 1 34.500l1.500-7z" fill="#fff" stroke="#2a5ec0" stroke-width="1.500" stroke-linejoin="round"/><path d="M20.500 1l5 4 2-2.500-5-4z" fill="#2a5ec0"/><g stroke="#2a5ec0" stroke-width="3.600" stroke-linecap="round"><path d="M20 11h13M16.500 19h10M13 27h9.500"/></g></svg>
<div class="t md" style="left:1042px;top:152.51px;font-size:11.8px;color:#222;width:44.0px;text-align:center;letter-spacing:.4px;text-indent:.4px">Editor</div>
<svg style="left:1092px;top:114px" width="34" height="30" viewBox="0 0 34 30"><defs><linearGradient id="cpg" x1="0" y1="0" x2="0" y2="1"><stop offset="0" stop-color="#5a8ec2"/><stop offset=".5" stop-color="#5a8ab8"/><stop offset=".62" stop-color="#8a9098"/><stop offset=".8" stop-color="#e9a888"/><stop offset="1" stop-color="#eaa27c"/></linearGradient><linearGradient id="cpg2" x1="0" y1="0" x2="0" y2="1"><stop offset="0" stop-color="#8c80bc"/><stop offset=".35" stop-color="#8a80b0"/><stop offset=".45" stop-color="#e96f3e"/><stop offset=".75" stop-color="#ec7444"/><stop offset=".85" stop-color="#eca882"/><stop offset="1" stop-color="#eca882"/></linearGradient></defs><path d="M21 1h3.500c2 0 3.300 1.200 3.800 3l1.500 5h-8z" fill="#2f5fc0"/><path d="M8 1h14L16 19.500H2.500C1 19.500 0 18.500.3 17L4 4.500C4.600 2.300 6 1 8 1z" fill="url(#cpg)"/><path d="M17.500 9.500h13.500c2 0 3 1.300 2.700 3.300L31 25.500c-.5 2.300-2 3.500-4 3.500H15.500c-2 0-3.500-1.500-3.500-3.500z" fill="url(#cpg2)"/><path d="M23.500 9.500L17 21.500" stroke="#f3f3f3" stroke-width="2.600"/></svg>
<div class="t md" style="left:1086px;top:152.51px;font-size:11.8px;color:#222;width:45.0px;text-align:center;letter-spacing:.4px;text-indent:.4px">Copilot</div>
<div class="sep" style="left:1144px;top:113px;height:69px"></div>
<svg style="left:1185px;top:115px" width="31" height="32" viewBox="0 0 31 32"><path d="M13 25H3a2 2 0 0 1-2-2V3a2 2 0 0 1 2-2h14l5 5v10" fill="none" stroke="#8fb0da" stroke-width="1.300"/><path d="M11 6v7l-5 5M11 13l5 3" fill="none" stroke="#8fb0da" stroke-width="1"/><rect x="15" y="17" width="6" height="11" rx="3" transform="rotate(45 18 22.500)" fill="none" stroke="#8fb0da" stroke-width="1.300"/><rect x="20" y="20" width="6" height="11" rx="3" transform="rotate(45 23 25.500)" fill="none" stroke="#8fb0da" stroke-width="1.300"/></svg>
<div class="t md" style="left:1150px;top:152.51px;font-size:11.8px;color:#777;width:91.0px;text-align:center;letter-spacing:.4px;text-indent:.4px">Create PDF</div>
<div class="t md" style="left:1150px;top:166.01px;font-size:11.8px;color:#777;width:91.0px;text-align:center;letter-spacing:.4px;text-indent:.4px">and share link</div>
<svg style="left:1253px;top:114.500px" width="38" height="32" viewBox="0 0 38 32"><path d="M22 19.500c-2-1-3.500-1-4-3 3-2 4-5 4-9A6.500 6.500 0 0 0 8.500 7.500c0 4 1 7 4 9-.5 2-2 2-4 3C4 21 1 23 1 26v2h12" fill="none" stroke="#8fb0da" stroke-width="1.200"/><path d="M16 23l4 4M20 23l-4 4M22 27c1-3 2-3 2.500-1 .5 2 1.500 2 2.500-.5s2-2.500 2.500 0 2 1.500 3.500-1.500" fill="none" stroke="#8fb0da" stroke-width="1.100"/><path d="M16 30.500h20" stroke="#aabbd0" stroke-width="1.400"/></svg>
<div class="t md" style="left:1240px;top:152.51px;font-size:11.8px;color:#777;width:62.0px;text-align:center;letter-spacing:.4px;text-indent:.4px">Request</div>
<div class="t md" style="left:1236px;top:166.01px;font-size:11.8px;color:#777;width:70.0px;text-align:center;letter-spacing:.4px;text-indent:.4px">Signatures</div>
<div class="sep" style="left:1316px;top:113px;height:69px"></div>
<svg style="left:1366px;top:109px" width="40" height="40" viewBox="0 0 40 40"><path fill="#2444b0" d="M20.40 11.50 L21.60 2.00 L18.40 2.00 L19.60 11.50ZM24.60 12.84 L30.39 5.21 L27.61 3.61 L23.90 12.44ZM27.56 16.10 L36.39 12.39 L34.79 9.61 L27.16 15.40ZM28.50 20.40 L38.00 21.60 L38.00 18.40 L28.50 19.60ZM27.16 24.60 L34.79 30.39 L36.39 27.61 L27.56 23.90ZM23.90 27.56 L27.61 36.39 L30.39 34.79 L24.60 27.16ZM19.60 28.50 L18.40 38.00 L21.60 38.00 L20.40 28.50ZM15.40 27.16 L9.61 34.79 L12.39 36.39 L16.10 27.56ZM12.44 23.90 L3.61 27.61 L5.21 30.39 L12.84 24.60ZM11.50 19.60 L2.00 18.40 L2.00 21.60 L11.50 20.40ZM12.84 15.40 L5.21 9.61 L3.61 12.39 L12.44 16.10ZM16.10 12.44 L12.39 3.61 L9.61 5.21 L15.40 12.84ZM21.20 16.70 L24.49 8.26 L21.98 7.59 L20.62 16.54ZM22.69 17.74 L29.76 12.08 L27.92 10.24 L22.26 17.31ZM23.46 19.38 L32.41 18.02 L31.74 15.51 L23.30 18.80ZM23.30 21.20 L31.74 24.49 L32.41 21.98 L23.46 20.62ZM22.26 22.69 L27.92 29.76 L29.76 27.92 L22.69 22.26ZM20.62 23.46 L21.98 32.41 L24.49 31.74 L21.20 23.30ZM18.80 23.30 L15.51 31.74 L18.02 32.41 L19.38 23.46ZM17.31 22.26 L10.24 27.92 L12.08 29.76 L17.74 22.69ZM16.54 20.62 L7.59 21.98 L8.26 24.49 L16.70 21.20ZM16.70 18.80 L8.26 15.51 L7.59 18.02 L16.54 19.38ZM17.74 17.31 L12.08 10.24 L10.24 12.08 L17.31 17.74ZM19.38 16.54 L18.02 7.59 L15.51 8.26 L18.80 16.70Z"/></svg>
<div class="t md" style="left:1330px;top:152.51px;font-size:11.8px;color:#222;width:112.0px;text-align:center;letter-spacing:.4px;text-indent:.4px">Asthra</div>
<div class="t md" style="left:1325px;top:166.01px;font-size:11.8px;color:#222;width:122.0px;text-align:center;letter-spacing:.4px;text-indent:.4px">Widget (Chat Mode)</div><div class="a" style="left:0;top:185px;width:1560px;height:1.500px;background:#dcdcdc"></div>
<div class="a" style="left:0;top:186.500px;width:1097px;height:17px;background:#fbfbfb"></div>
<div class="a" style="left:0;top:203.500px;width:1097px;height:1px;background:#e2e2e2"></div>
<div class="a" style="left:18px;top:204.500px;width:1079px;height:769px;background:#f5f5f5"></div>
<div class="a" style="left:24px;top:211px;width:1073px;height:762px;background:#e9e9e9"></div>
<div class="a" style="left:92.500px;top:211px;width:935.500px;height:762px;background:#fff;box-shadow:-1px 0 0 #cfcfcf,1px 0 0 #cfcfcf,0 0 3px rgba(0,0,0,.08)"></div>
<div class="a" style="left:0;top:204.500px;width:17.500px;height:769px;background:#fbfbfb;border-right:1px solid #e4e4e4"></div>
<div class="a" style="left:90px;top:186.500px;width:113.500px;height:17px;background:#dedede"></div>
<div class="a" style="left:910px;top:186.500px;width:112.500px;height:17px;background:#dedede"></div>
<div class="a" style="left:17.500px;top:186.500px;width:1px;height:17px;background:#e0e0e0"></div>
<svg style="left:3px;top:188px" width="11" height="13" viewBox="0 0 11 13"><path d="M2 12.500V5h6.500M6.500 2.500L9 5 6.500 7.500" fill="none" stroke="#555" stroke-width="1.300"/></svg>
<svg style="left:0;top:0" width="1100" height="215" viewBox="0 0 1100 215"><path d="M103.29 199v3.500M114.40 199v3.500M125.51 199v3.500M136.62 193.500v9M147.74 199v3.500M158.85 199v3.500M169.96 199v3.500M181.08 193.500v9M192.19 199v3.500M214.41 199v3.500M225.53 193.500v9M236.64 199v3.500M247.75 199v3.500M258.86 199v3.500M269.98 193.500v9M281.09 199v3.500M292.20 199v3.500M303.31 199v3.500M314.43 193.500v9M325.54 199v3.500M336.65 199v3.500M347.76 199v3.500M358.88 193.500v9M369.99 199v3.500M381.10 199v3.500M392.21 199v3.500M403.33 193.500v9M414.44 199v3.500M425.55 199v3.500M436.66 199v3.500M447.78 193.500v9M458.89 199v3.500M470.00 199v3.500M481.11 199v3.500M492.23 193.500v9M503.34 199v3.500M514.45 199v3.500M525.56 199v3.500M536.67 193.500v9M547.79 199v3.500M558.90 199v3.500M570.01 199v3.500M581.12 193.500v9M592.24 199v3.500M603.35 199v3.500M614.46 199v3.500M625.58 193.500v9M636.69 199v3.500M647.80 199v3.500M658.91 199v3.500M670.03 193.500v9M681.14 199v3.500M692.25 199v3.500M703.36 199v3.500M714.48 193.500v9M725.59 199v3.500M736.70 199v3.500M747.81 199v3.500M758.92 193.500v9M770.04 199v3.500M781.15 199v3.500M792.26 199v3.500M803.38 193.500v9M814.49 199v3.500M825.60 199v3.500M836.71 199v3.500M847.83 193.500v9M858.94 199v3.500M870.05 199v3.500M881.16 199v3.500M892.28 193.500v9M903.39 199v3.500M914.50 199v3.500M925.61 199v3.500M936.73 193.500v9M947.84 199v3.500M958.95 199v3.500M970.06 199v3.500M981.17 193.500v9M992.29 199v3.500M1003.40 199v3.500M1014.51 199v3.500" stroke="#a8a8a8" stroke-width="1"/><g font-family="Liberation Sans" font-size="10.500" fill="#666" text-anchor="middle"><text x="114.40" y="196.300">2</text><text x="158.85" y="196.300">1</text><text x="247.75" y="196.300">1</text><text x="292.20" y="196.300">2</text><text x="336.65" y="196.300">3</text><text x="381.10" y="196.300">4</text><text x="425.55" y="196.300">5</text><text x="470.00" y="196.300">6</text><text x="514.45" y="196.300">7</text><text x="558.90" y="196.300">8</text><text x="603.35" y="196.300">9</text><text x="647.80" y="196.300">10</text><text x="692.25" y="196.300">11</text><text x="736.70" y="196.300">12</text><text x="781.15" y="196.300">13</text><text x="825.60" y="196.300">14</text><text x="870.05" y="196.300">15</text><text x="914.50" y="196.300">16</text><text x="958.95" y="196.300">17</text><text x="1003.40" y="196.300">18</text></g><path d="M198.500 186.500h11l-5.500 6.500zM198.500 200.500h11l-5.500-6.500z" fill="#fff" stroke="#888" stroke-width="1"/><rect x="198.500" y="203" width="11" height="6.500" rx="1.500" fill="#fff" stroke="#888" stroke-width="1"/><path d="M904.500 202.500h11l-5.500-6.500z" fill="#fff" stroke="#888" stroke-width="1"/><path d="M259.7 204.500v2.500M316.1 204.500v2.500M372.5 204.500v2.500M428.9 204.500v2.500M485.3 204.500v2.500M541.7 204.500v2.500M598.1 204.500v2.500M654.5 204.500v2.500M710.9 204.500v2.500M767.3 204.500v2.500M823.7 204.500v2.500M880.1 204.500v2.500" stroke="#777" stroke-width="1"/></svg>
<svg style="left:0;top:0" width="20" height="1000" viewBox="0 0 20 1000"><path d="M12.500 220.80h4M12.500 231.91h4M7 243.03h9.500M12.500 254.14h4M12.500 265.25h4M12.500 276.36h4M7 287.48h9.500M12.500 298.59h4M12.500 309.70h4M12.500 320.81h4M7 331.93h9.500M12.500 343.04h4M12.500 354.15h4M12.500 365.26h4M7 376.38h9.500M12.500 387.49h4M12.500 398.60h4M12.500 409.71h4M7 420.83h9.500M12.500 431.94h4M12.500 443.05h4M12.500 454.16h4M7 465.28h9.500M12.500 476.39h4M12.500 487.50h4M12.500 498.61h4M7 509.73h9.500M12.500 520.84h4M12.500 531.95h4M12.500 543.06h4M7 554.17h9.500M12.500 565.29h4M12.500 576.40h4M12.500 587.51h4M7 598.62h9.500M12.500 609.74h4M12.500 620.85h4M12.500 631.96h4M7 643.08h9.500M12.500 654.19h4M12.500 665.30h4M12.500 676.41h4M7 687.53h9.500M12.500 698.64h4M12.500 709.75h4M12.500 720.86h4M7 731.98h9.500M12.500 743.09h4M12.500 754.20h4M12.500 765.31h4M7 776.42h9.500M12.500 787.54h4M12.500 798.65h4M12.500 809.76h4M7 820.88h9.500M12.500 831.99h4M12.500 843.10h4M12.500 854.21h4M7 865.33h9.500M12.500 876.44h4M12.500 887.55h4M12.500 898.66h4M7 909.78h9.500M12.500 920.89h4M12.500 932.00h4M12.500 943.11h4M7 954.23h9.500M12.500 965.34h4" stroke="#a8a8a8" stroke-width="1"/><g font-family="Liberation Sans" font-size="10.500" fill="#666" text-anchor="middle"><text transform="translate(5.800 220.80) rotate(-90)" y="3.800">1</text><text transform="translate(5.800 265.25) rotate(-90)" y="3.800">2</text><text transform="translate(5.800 309.70) rotate(-90)" y="3.800">3</text><text transform="translate(5.800 354.15) rotate(-90)" y="3.800">4</text><text transform="translate(5.800 398.60) rotate(-90)" y="3.800">5</text><text transform="translate(5.800 443.05) rotate(-90)" y="3.800">6</text><text transform="translate(5.800 487.50) rotate(-90)" y="3.800">7</text><text transform="translate(5.800 531.95) rotate(-90)" y="3.800">8</text><text transform="translate(5.800 576.40) rotate(-90)" y="3.800">9</text><text transform="translate(5.800 620.85) rotate(-90)" y="3.800">10</text><text transform="translate(5.800 665.30) rotate(-90)" y="3.800">11</text><text transform="translate(5.800 709.75) rotate(-90)" y="3.800">12</text><text transform="translate(5.800 754.20) rotate(-90)" y="3.800">13</text><text transform="translate(5.800 798.65) rotate(-90)" y="3.800">14</text><text transform="translate(5.800 843.10) rotate(-90)" y="3.800">15</text><text transform="translate(5.800 887.55) rotate(-90)" y="3.800">16</text><text transform="translate(5.800 932.00) rotate(-90)" y="3.800">17</text></g></svg>
<div class="doc" style="left:206px;top:228.03px;letter-spacing:-0.350px">For</div>
<div class="doc" style="left:206px;top:274.11px;letter-spacing:0.108px">Ophthalmic Imaging Device XR-200 (Synthetic Demo)</div>
<div class="doc" style="left:206px;top:320.19px;letter-spacing:0.146px">Document Number: CER-DEMO-2026-0042</div>
<div class="doc" style="left:206px;top:343.23px;letter-spacing:-0.058px">Revision: 1.0</div>
<div class="doc" style="left:206px;top:366.27px;letter-spacing:0.092px">Date of Evaluation: 17 April 2026</div>
<div class="doc" style="left:206px;top:389.31px;letter-spacing:0.081px">Prepared by: Regulatory Affairs Team</div>
<div class="doc" style="left:206px;top:412.35px;letter-spacing:-0.179px">Standard: EU MDR 2017/745, MEDDEV 2.7/1 Rev 4</div>
<div class="doc" style="left:234.8px;top:481.47px;letter-spacing:0.450px">1.</div>
<div class="doc" style="left:263px;top:481.47px;letter-spacing:0.027px">Executive Summary</div>
<div class="doc" style="left:206px;top:504.51px;letter-spacing:0.256px">The present Clinical Evaluation Report documents the evaluation of the Ophthalmic</div>
<div class="doc" style="left:206px;top:527.55px;letter-spacing:0.009px">Imaging Device XR-200 in accordance with EU MDR 2017/745 Article 61 and Annex XIV,</div>
<div class="doc" style="left:206px;top:550.59px;letter-spacing:0.127px">with guidance from MEDDEV 2.7/1 Rev 4. This evaluation demonstrates the device’s</div>
<div class="doc" style="left:206px;top:573.63px;letter-spacing:0.114px">conformity with the General Safety and Performance Requirements (GSPR) for its</div>
<div class="doc" style="left:206px;top:596.67px;letter-spacing:0.330px">intended purpose.</div>
<div class="doc" style="left:206px;top:642.75px;letter-spacing:0.131px">This report covers the period January 2023 to December 2025 and integrates clinical</div>
<div class="doc" style="left:206px;top:665.79px;letter-spacing:0.311px">data from three post-market clinical follow-up studies, a systematic review of peer-</div>
<div class="doc" style="left:206px;top:688.83px;letter-spacing:0.319px">reviewed literature, and post-market surveillance records.</div>
<div class="doc" style="left:234.1px;top:757.95px;letter-spacing:0.450px">2.</div>
<div class="doc" style="left:262.7px;top:757.95px;letter-spacing:0.195px">Scope of the Clinical Evaluation</div>
<div class="doc" style="left:234.1px;top:780.99px;letter-spacing:0.088px">2.1 Date Range of Data Sets under Consideration</div>
<div class="doc" style="left:234.1px;top:804.03px;letter-spacing:0.450px">3.</div>
<div class="doc" style="left:262.7px;top:804.03px;letter-spacing:0.132px">Data sets span January 2023 to December 2025, covering all post-market</div>
<div class="doc" style="left:262.7px;top:827.07px;letter-spacing:0.396px">clinical follow-up activities conducted during this period.</div>
<div class="doc" style="left:206.2px;top:850.11px;letter-spacing:0.075px">2.2 Proprietary and Code Names of Device</div>
<div class="doc" style="left:206px;top:896.19px;letter-spacing:0.173px">The device evaluated in this report is commercialized as the XR-200 Ophthalmic</div>
<div class="doc" style="left:206px;top:919.23px;letter-spacing:-0.040px">Imaging System.</div>
<div class="doc" style="left:234.1px;top:965.31px;letter-spacing:0.450px">4.</div>
<div class="doc" style="left:262.7px;top:965.31px;letter-spacing:0.055px">Device Overview</div>
<div class="a" style="left:205.500px;top:294px;width:1.300px;height:22px;background:#222"></div>
<svg style="left:130px;top:280px" width="40" height="40" viewBox="0 0 40 40"><path d="M12.400 8.200Q13 11.600 16.400 12.200Q13 12.800 12.400 16.200Q11.800 12.800 8.400 12.200Q11.800 11.600 12.400 8.200Z" fill="#222"/><path d="M16 15.600Q16.400 17.800 18.600 18.200Q16.400 18.600 16 20.800Q15.600 18.600 13.400 18.200Q15.600 17.800 16 15.600Z" fill="#222"/><path d="M18.300 15.500L23 11.300A3.200 3.200 0 0 1 27.600 15.800L16 26.800Q14 28 10.300 28.600Q10.800 25 12.300 22.800L13.300 21.600M25.600 18.300Q27.300 19.800 25.500 21.500" fill="none" stroke="#222" stroke-width="1.300" stroke-linecap="round"/></svg><div class="a" style="left:1097px;top:186.500px;width:463px;height:787px;background:#f7f7f7;border-left:1px solid #cdcdcd"></div>
<div class="t" style="left:1116.7px;top:195.13px;font-size:14.5px;font-weight:bold;color:#222;letter-spacing:0.156px;">Asthra Widget (Chat Mode)</div>
<svg style="left:1526px;top:193.500px" width="17" height="17" viewBox="0 0 17 17"><circle cx="8.500" cy="8.500" r="8" fill="#7a7a7a"/><path d="M5.500 5.500l6 6M11.500 5.500l-6 6" stroke="#fff" stroke-width="1.600" stroke-linecap="round"/></svg>
<div class="a" style="left:1107.200px;top:225.300px;width:443.600px;height:748px;background:#fff"></div>
<div class="a" style="left:1277.700px;top:243.400px;width:102px;height:28.400px;border-radius:14.200px;background:#eb7145"></div>
<div class="t" style="left:1293.2px;top:250.33px;font-size:14.5px;font-weight:bold;color:#fff;letter-spacing:-0.336px;">SANDBOX</div>
<div class="t" style="left:1278.3px;top:285.07px;font-size:11.5px;font-weight:normal;color:#888;letter-spacing:-0.222px;">Click to switch mode</div>
<svg style="left:1317px;top:377px" width="24" height="24" viewBox="0 0 40 40"><path fill="#4a48b0" d="M20.35 7.50 L21.30 0.50 L18.70 0.50 L19.65 7.50ZM25.11 8.59 L28.66 2.48 L26.26 1.49 L24.46 8.32ZM29.09 11.41 L34.71 7.13 L32.87 5.29 L28.59 10.91ZM31.68 15.54 L38.51 13.74 L37.52 11.34 L31.41 14.89ZM32.50 20.35 L39.50 21.30 L39.50 18.70 L32.50 19.65ZM31.41 25.11 L37.52 28.66 L38.51 26.26 L31.68 24.46ZM28.59 29.09 L32.87 34.71 L34.71 32.87 L29.09 28.59ZM24.46 31.68 L26.26 38.51 L28.66 37.52 L25.11 31.41ZM19.65 32.50 L18.70 39.50 L21.30 39.50 L20.35 32.50ZM14.89 31.41 L11.34 37.52 L13.74 38.51 L15.54 31.68ZM10.91 28.59 L5.29 32.87 L7.13 34.71 L11.41 29.09ZM8.32 24.46 L1.49 26.26 L2.48 28.66 L8.59 25.11ZM7.50 19.65 L0.50 18.70 L0.50 21.30 L7.50 20.35ZM8.59 14.89 L2.48 11.34 L1.49 13.74 L8.32 15.54ZM11.41 10.91 L7.13 5.29 L5.29 7.13 L10.91 11.41ZM15.54 8.32 L13.74 1.49 L11.34 2.48 L14.89 8.59Z"/><path fill="#7d86c8" d="M21.42 14.16 L23.03 8.88 L21.46 8.56 L20.93 14.07ZM23.54 15.15 L27.05 10.88 L25.72 9.99 L23.13 14.87ZM25.13 16.87 L30.01 14.28 L29.12 12.95 L24.85 16.46ZM25.93 19.07 L31.44 18.54 L31.12 16.97 L25.84 18.58ZM25.84 21.42 L31.12 23.03 L31.44 21.46 L25.93 20.93ZM24.85 23.54 L29.12 27.05 L30.01 25.72 L25.13 23.13ZM23.13 25.13 L25.72 30.01 L27.05 29.12 L23.54 24.85ZM20.93 25.93 L21.46 31.44 L23.03 31.12 L21.42 25.84ZM18.58 25.84 L16.97 31.12 L18.54 31.44 L19.07 25.93ZM16.46 24.85 L12.95 29.12 L14.28 30.01 L16.87 25.13ZM14.87 23.13 L9.99 25.72 L10.88 27.05 L15.15 23.54ZM14.07 20.93 L8.56 21.46 L8.88 23.03 L14.16 21.42ZM14.16 18.58 L8.88 16.97 L8.56 18.54 L14.07 19.07ZM15.15 16.46 L10.88 12.95 L9.99 14.28 L14.87 16.87ZM16.87 14.87 L14.28 9.99 L12.95 10.88 L16.46 15.15ZM19.07 14.07 L18.54 8.56 L16.97 8.88 L18.58 14.16Z"/></svg>
<div class="t" style="left:1298px;top:404.54px;font-size:12px;font-weight:normal;color:#3a48b5;letter-spacing:0.046px;">ASTHRA AI</div>
<div class="t" style="left:1231.7px;top:440.47px;font-size:28.5px;font-weight:bold;color:#1a1a1a;letter-spacing:-1.140px;-webkit-text-stroke:.9px #1a1a1a">Welcome back!</div>
<div class="t" style="left:1218.7px;top:473.67px;font-size:14.8px;font-weight:normal;color:#9a9a9a;letter-spacing:0.155px;">Login to continue using Asthra AI</div>
<div class="t" style="left:1151.5px;top:532.15px;font-size:14px;font-weight:bold;color:#333;letter-spacing:-0.090px;">Email</div>
<div class="a" style="left:1151.500px;top:556.500px;width:354.500px;height:43.500px;border-radius:6px;background:#fff;border:1px solid #d2d2d2;box-shadow:0 1px 0 #6a6a6a"></div>
<div class="t" style="left:1172.4px;top:570.06px;font-size:18px;font-weight:normal;color:#1a1a1a;letter-spacing:0.084px;">Confidential_demo@asthra-writer.ai</div>
<div class="t" style="left:1151.5px;top:627.65px;font-size:14px;font-weight:bold;color:#333;letter-spacing:0.051px;">Password</div>
<div class="a" style="left:1151.500px;top:652px;width:354.500px;height:43.200px;border-radius:6px;background:#fff;border:1px solid #d2d2d2;box-shadow:0 1px 0 #6a6a6a"></div>
<div class="t" style="left:1172.4px;top:665.06px;font-size:18px;font-weight:normal;color:#777;letter-spacing:-0.038px;">Enter your password</div>
<div class="a" style="left:1160px;top:727px;width:18px;height:18px;border-radius:2.500px;background:#2c5fbe"></div>
<svg style="left:1160px;top:727px" width="18" height="18" viewBox="0 0 18 18"><path d="M5 9.300l2.700 2.700L13 6.500" fill="none" stroke="#fff" stroke-width="1.700" stroke-linecap="round" stroke-linejoin="round"/></svg>
<div class="t" style="left:1191.6px;top:730.15px;font-size:14px;font-weight:normal;color:#888;letter-spacing:-0.098px;">Keep me logged in</div>
<div class="a" style="left:1151px;top:786.300px;width:355.700px;height:48.500px;border-radius:24.250px;background:#9184b6"></div>
<div class="t" style="left:1308px;top:802.11px;font-size:17px;font-weight:bold;color:#fff;letter-spacing:-1.216px;">Login</div>
<div class="t" style="left:1215.3px;top:865.33px;font-size:14.5px;font-weight:normal;color:#888;letter-spacing:-0.272px;">Don't have an account?</div>
<div class="t" style="left:1366.2px;top:865.33px;font-size:14.5px;font-weight:normal;color:#2b4a80;letter-spacing:-0.361px;">Sign up now</div>
<div class="t" style="left:1252.3px;top:902.97px;font-size:13.5px;font-weight:normal;color:#2b4a80;letter-spacing:-0.307px;">Need help? Contact admin</div>
<div class="a" style="left:1526.400px;top:892.600px;width:28.300px;height:27.800px;border-radius:4px;background:#f9f9f9;border:1px solid #e6e6e6"></div>
<svg style="left:1535.500px;top:901.500px" width="10" height="10" viewBox="0 0 10 10"><path d="M1.500 1.500L8.500 5 1.500 8.500" fill="none" stroke="#999" stroke-width="1.200"/></svg>
<div class="a" style="left:0;top:973.500px;width:1560px;height:26.500px;background:linear-gradient(#e6e6e6,#e0e0e0);border-top:1.200px solid #c2c2c2"></div>
<div class="t" style="left:27px;top:980.57px;font-size:13.5px;font-weight:normal;color:#666;letter-spacing:-0.206px;">Page 1 of 1</div>
<div class="t" style="left:117.4px;top:980.57px;font-size:13.5px;font-weight:normal;color:#666;letter-spacing:0.338px;">240 words</div>
<svg style="left:203px;top:980px" width="20" height="16" viewBox="0 0 20 16"><path d="M1 2.500c2-1 5-1 7 0v11c-2-1-5-1-7 0zM8 2.500v11c1 0 2 0 2.500 1" fill="none" stroke="#777" stroke-width="1.200"/><path d="M12 2l5 5M17 2l-5 5" stroke="#777" stroke-width="1.200"/></svg>
<div class="t" style="left:243px;top:980.57px;font-size:13.5px;font-weight:normal;color:#666;letter-spacing:0.224px;">English (United States)</div>
<svg style="left:408px;top:979px" width="20" height="16" viewBox="0 0 20 16"><circle cx="4" cy="3" r="2.300" fill="#777"/><path d="M4 5.500v8.500M1 14h7M9 2.500h8M13 2.500V14M11 14h4" fill="none" stroke="#777" stroke-width="1.500"/></svg>
<svg style="left:445px;top:979px" width="18" height="17" viewBox="0 0 18 17"><circle cx="8" cy="2.500" r="1.800" fill="none" stroke="#777" stroke-width="1.200"/><path d="M1.500 6l6.500 1.500L14.500 6M8 7.500v3.500l-4 5M8 11l2 2" fill="none" stroke="#777" stroke-width="1.200"/><path d="M11 11l5.500 5.500M16.500 11L11 16.500" stroke="#777" stroke-width="1.200"/></svg>
<div class="t" style="left:468.6px;top:980.57px;font-size:13.5px;font-weight:normal;color:#666;letter-spacing:0.283px;">Accessibility: Investigate</div>
<div class="a" style="left:759px;top:976.500px;width:42px;height:6.500px;border-radius:3.300px;background:#7a7a7a;border:1px solid #999"></div>
<div class="a" style="left:1097px;top:974.500px;width:1px;height:25px;background:#dcdcdc"></div>
<svg style="left:1091px;top:980px" width="19" height="14" viewBox="0 0 19 14"><rect x="1" y="1" width="17" height="12" rx="2" fill="none" stroke="#777" stroke-width="1.200"/><path d="M3.500 5V3.500H5M14 3.500h1.500V5M15.500 9v1.500H14M5 10.500H3.500V9" fill="none" stroke="#777" stroke-width="1"/></svg>
<div class="t" style="left:1118.4px;top:980.57px;font-size:13.5px;font-weight:normal;color:#666;letter-spacing:0.109px;">Focus</div>
<div class="a" style="left:1168px;top:974.500px;width:41px;height:25.500px;background:#c3c3c3"></div>
<svg style="left:1181px;top:979.500px" width="16" height="16" viewBox="0 0 16 16"><rect x="1" y="1" width="14" height="14" fill="#fafafa" stroke="#666" stroke-width="1.100"/><path d="M3.500 4.500h9M3.500 7h9M3.500 9.500h9M3.500 12h9" stroke="#777" stroke-width="1"/></svg>
<svg style="left:1218px;top:979px" width="20" height="18" viewBox="0 0 20 18"><rect x="1" y="1" width="13" height="12" fill="none" stroke="#666" stroke-width="1.100"/><path d="M3.500 4h8M3.500 6.500h6M3.500 9h4" stroke="#777" stroke-width="1"/><circle cx="14" cy="12.500" r="4.500" fill="#666"/><path d="M12 10.500c1 1 2 .5 3 1.500s0 2 1 3" stroke="#e8e8e8" stroke-width="1" fill="none"/></svg>
<svg style="left:1259px;top:981px" width="19" height="13" viewBox="0 0 19 13"><path d="M1 1.500h2M6 1.500h12M4 6.500h2M9 6.500h9M4 11.500h2M9 11.500h9" stroke="#777" stroke-width="1.300"/></svg>
<svg style="left:1299px;top:981px" width="17" height="13" viewBox="0 0 17 13"><path d="M0.500 1h16M0.500 4.500h13M0.500 8h16M0.500 11.500h13" stroke="#777" stroke-width="1.300"/></svg>
<div class="a" style="left:1336.500px;top:986.500px;width:9px;height:1.800px;background:#666"></div>
<div class="a" style="left:1353.600px;top:985.800px;width:110.400px;height:3.400px;border-radius:1.700px;background:#9a9a9a"></div>
<div class="a" style="left:1403px;top:978.500px;width:20px;height:18px;border-radius:9px;background:#fff;box-shadow:0 0 1px rgba(0,0,0,.35)"></div>
<div class="a" style="left:1471.500px;top:986.500px;width:10px;height:1.800px;background:#666"></div>
<div class="a" style="left:1475.600px;top:982.400px;width:1.800px;height:10px;background:#666"></div>
<div class="t" style="left:1500px;top:980.57px;font-size:13.5px;font-weight:normal;color:#666;letter-spacing:-0.710px;">141%</div></div></body></html>
